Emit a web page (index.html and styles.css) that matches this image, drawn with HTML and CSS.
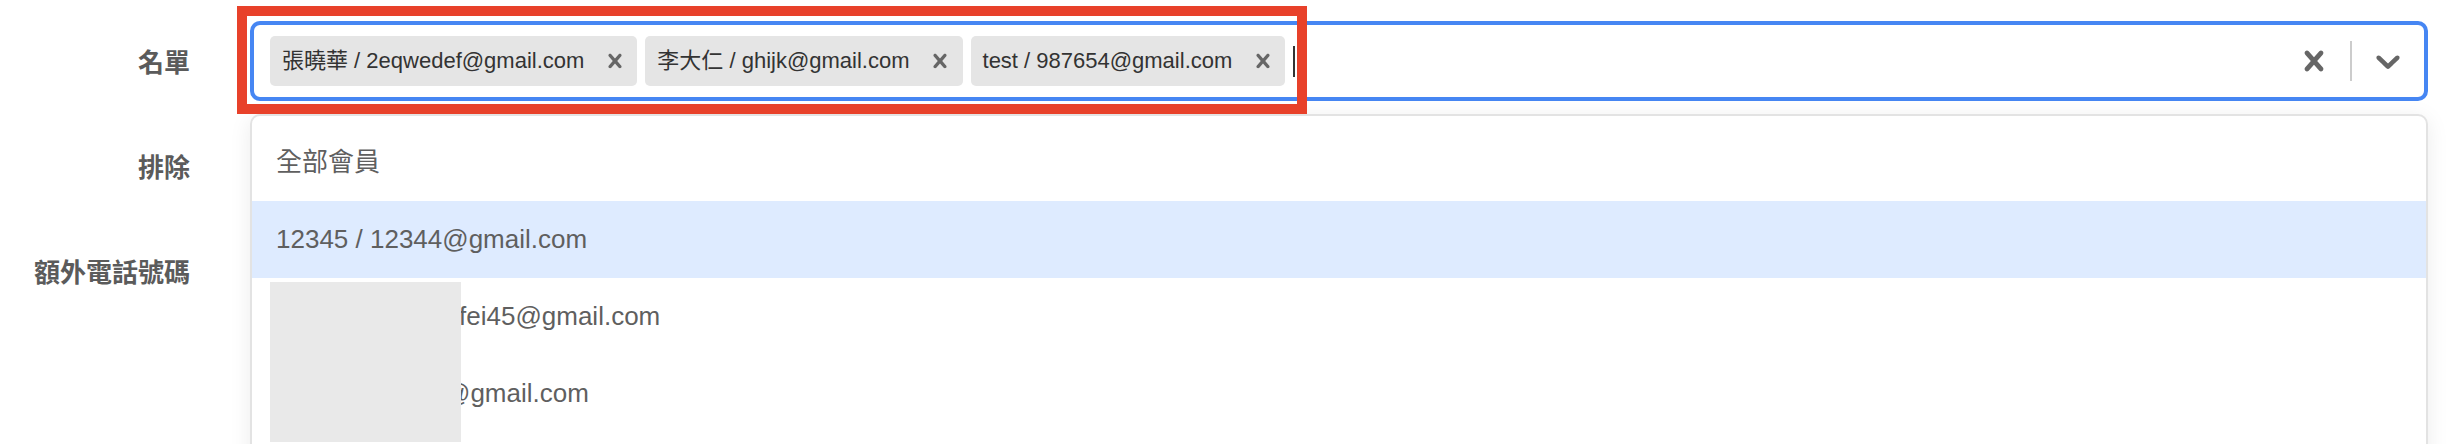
FILE: index.html
```html
<!DOCTYPE html>
<html lang="zh-Hant">
<head>
<meta charset="utf-8">
<title>名單</title>
<link rel="stylesheet" href="styles.css">
</head>
<body>
<form class="form">
  <div class="label">名單</div>
  <div class="select">
    <div class="control">
      <div class="values">
        <div class="tag"><span class="tag-label">張曉華 / 2eqwedef@gmail.com</span><span class="tag-remove"><svg viewBox="0 0 20 20" width="28" height="28"><path d="M14.348 14.849c-0.469 0.469-1.229 0.469-1.697 0l-2.651-3.030-2.651 3.029c-0.469 0.469-1.229 0.469-1.697 0-0.469-0.469-0.469-1.229 0-1.697l2.758-3.15-2.759-3.152c-0.469-0.469-0.469-1.228 0-1.697s1.228-0.469 1.697 0l2.652 3.031 2.651-3.031c0.469-0.469 1.228-0.469 1.697 0s0.469 1.229 0 1.697l-2.758 3.152 2.758 3.15c0.469 0.469 0.469 1.229 0 1.698z"/></svg></span></div>
        <div class="tag"><span class="tag-label">李大仁 / ghijk@gmail.com</span><span class="tag-remove"><svg viewBox="0 0 20 20" width="28" height="28"><path d="M14.348 14.849c-0.469 0.469-1.229 0.469-1.697 0l-2.651-3.030-2.651 3.029c-0.469 0.469-1.229 0.469-1.697 0-0.469-0.469-0.469-1.229 0-1.697l2.758-3.15-2.759-3.152c-0.469-0.469-0.469-1.228 0-1.697s1.228-0.469 1.697 0l2.652 3.031 2.651-3.031c0.469-0.469 1.228-0.469 1.697 0s0.469 1.229 0 1.697l-2.758 3.152 2.758 3.15c0.469 0.469 0.469 1.229 0 1.698z"/></svg></span></div>
        <div class="tag"><span class="tag-label">test / 987654@gmail.com</span><span class="tag-remove"><svg viewBox="0 0 20 20" width="28" height="28"><path d="M14.348 14.849c-0.469 0.469-1.229 0.469-1.697 0l-2.651-3.030-2.651 3.029c-0.469 0.469-1.229 0.469-1.697 0-0.469-0.469-0.469-1.229 0-1.697l2.758-3.15-2.759-3.152c-0.469-0.469-0.469-1.228 0-1.697s1.228-0.469 1.697 0l2.652 3.031 2.651-3.031c0.469-0.469 1.228-0.469 1.697 0s0.469 1.229 0 1.697l-2.758 3.152 2.758 3.15c0.469 0.469 0.469 1.229 0 1.698z"/></svg></span></div>
        <span class="caret"></span>
      </div>
      <div class="indicators">
        <span class="indicator"><svg viewBox="0 0 20 20" width="40" height="40"><path d="M14.348 14.849c-0.469 0.469-1.229 0.469-1.697 0l-2.651-3.030-2.651 3.029c-0.469 0.469-1.229 0.469-1.697 0-0.469-0.469-0.469-1.229 0-1.697l2.758-3.15-2.759-3.152c-0.469-0.469-0.469-1.228 0-1.697s1.228-0.469 1.697 0l2.652 3.031 2.651-3.031c0.469-0.469 1.228-0.469 1.697 0s0.469 1.229 0 1.697l-2.758 3.152 2.758 3.15c0.469 0.469 0.469 1.229 0 1.698z"/></svg></span>
        <span class="separator"></span>
        <span class="indicator"><svg viewBox="0 0 20 20" width="40" height="40"><path d="M4.516 7.548c0.436-0.446 1.043-0.481 1.576 0l3.908 3.747 3.908-3.747c0.533-0.481 1.141-0.446 1.574 0 0.436 0.445 0.408 1.197 0 1.615-0.406 0.418-4.695 4.502-4.695 4.502-0.217 0.223-0.502 0.335-0.787 0.335s-0.57-0.112-0.789-0.335c0 0-4.287-4.084-4.695-4.502s-0.436-1.170 0-1.615z"/></svg></span>
      </div>
    </div>
    <div class="menu">
      <div class="option">全部會員</div>
      <div class="option focused">12345 / 12344@gmail.com</div>
      <div class="option"><span class="hidden-a"></span>fei45@gmail.com</div>
      <div class="option"><span class="hidden-b"></span>@gmail.com</div>
      <div class="redaction"></div>
    </div>
    <div class="annotation"></div>
  </div>

  <div class="label">排除</div>
  <div class="field"></div>

  <div class="label">額外電話號碼</div>
  <div class="field"></div>
</form>
</body>
</html>
```

FILE: styles.css
```css
* { box-sizing: border-box; }

html, body {
  margin: 0;
  padding: 0;
  background: #ffffff;
  overflow: hidden;
}

body {
  font-family: "Liberation Sans", "Noto Sans CJK TC", sans-serif;
  width: 2448px;
  height: 444px;
}

.form {
  display: grid;
  grid-template-columns: 190px 1fr;
  grid-auto-rows: 80px;
  column-gap: 60px;
  row-gap: 25px;
  padding: 21px 20px 0 0;
}

.label {
  align-self: center;
  text-align: right;
  font-family: "Noto Sans CJK TC", "Liberation Sans", sans-serif;
  font-weight: 700;
  font-size: 26px;
  line-height: 36px;
  color: #5b5b5b;
}

.select {
  position: relative;
  z-index: 2;
}

.control {
  height: 80px;
  border: 4px solid #4686f3;
  border-radius: 10px;
  display: flex;
  align-items: center;
  background: #fff;
}

.values {
  flex: 1;
  display: flex;
  align-items: center;
  padding-left: 12px;
  min-width: 0;
}

.tag {
  display: flex;
  align-items: center;
  height: 50px;
  margin: 0 4px;
  background: #e5e5e5;
  border-radius: 5px;
}

.tag-label {
  padding: 0 8px 0 12px;
  font-size: 22px;
  line-height: 50px;
  color: #333;
  white-space: nowrap;
}

.tag-remove {
  width: 45px;
  height: 50px;
  display: flex;
  align-items: center;
  justify-content: center;
  fill: #666;
}

.tag-remove svg { display: block; }

.caret {
  width: 2px;
  height: 31px;
  margin-left: 4px;
  background: #333;
}

.indicators {
  display: flex;
  align-items: center;
  height: 100%;
}

.indicator {
  display: flex;
  padding: 16px;
  fill: #666;
}

.indicator svg { display: block; }

.separator {
  width: 2px;
  height: 40px;
  background: #cccccc;
}

.menu {
  position: absolute;
  top: 93px;
  left: 0;
  right: 0;
  height: 400px;
  padding-top: 8px;
  background: #fff;
  border: 2px solid #e3e3e3;
  border-radius: 10px;
  box-shadow: 0 4px 22px rgba(0, 0, 0, 0.08);
}

.option {
  height: 77px;
  padding: 0 24px;
  font-size: 26px;
  line-height: 77px;
  color: #5f5f5f;
  white-space: nowrap;
}

.option.focused {
  background: #deebff;
}

.hidden-a {
  display: inline-block;
  width: 183px;
}

.hidden-b {
  display: inline-block;
  width: 168px;
}

.redaction {
  position: absolute;
  left: 18px;
  top: 166px;
  width: 191px;
  height: 160px;
  background: #e9e9e9;
}

.annotation {
  position: absolute;
  left: -13px;
  top: -15px;
  width: 1070px;
  height: 108px;
  border: 10px solid #e8412a;
  pointer-events: none;
}

.field {
  height: 80px;
}
```
